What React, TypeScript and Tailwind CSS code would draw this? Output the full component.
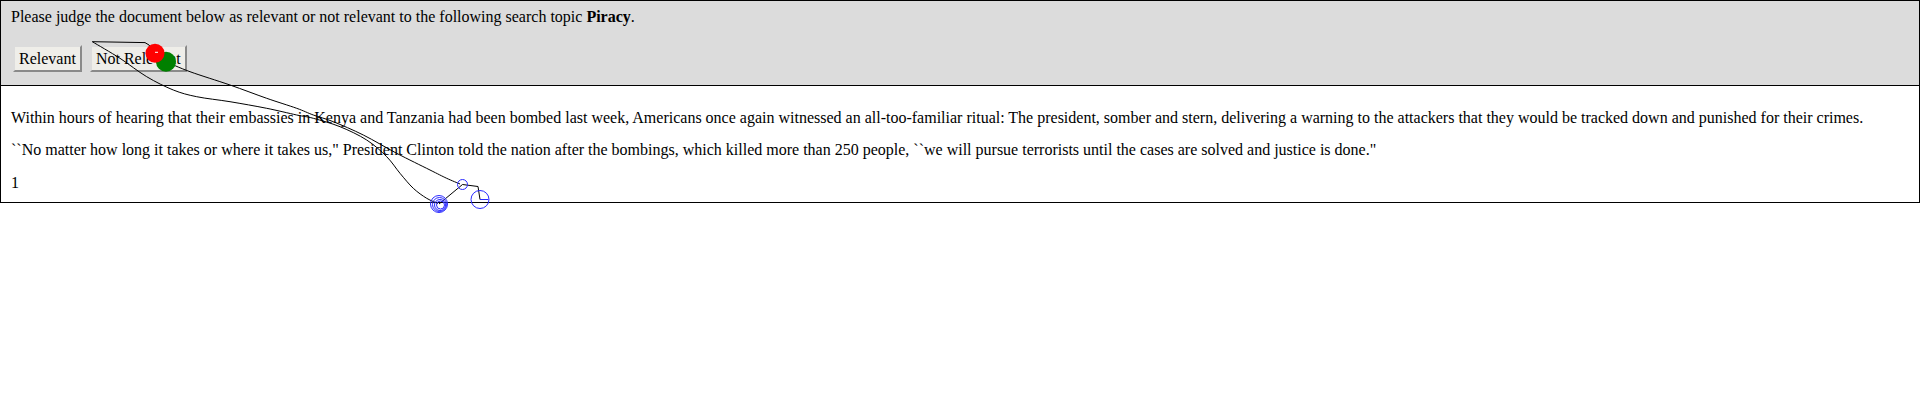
import React from "react";

type Pt = [number, number];

// mouse trace, in page pixels
const traceA: Pt[] = [
  [92.3, 41.7], [120, 58.3], [146.7, 76.7], [173.3, 90], [196.7, 96.7], [230, 101.7],
  [266.7, 108.3], [296.7, 115], [313.3, 118.3], [340, 126.7], [366.7, 140], [386.7, 156.7],
  [400, 173.3], [413.3, 188.3], [426.7, 198.3], [438, 203.5],
];

const traceB: Pt[] = [
  [166, 61.7], [190, 71.7], [230, 85], [266.7, 98.3], [296.7, 108.3], [313.3, 115],
  [333.3, 121.7], [363.3, 135], [396.7, 153.3], [430, 170], [446.7, 178.3], [460, 184],
];

function smooth(pts: Pt[]) {
  let d = `M${pts[0][0]},${pts[0][1]}`;
  for (let i = 0; i < pts.length - 1; i++) {
    const p0 = pts[i - 1] || pts[i];
    const p1 = pts[i];
    const p2 = pts[i + 1];
    const p3 = pts[i + 2] || p2;
    const c1x = p1[0] + (p2[0] - p0[0]) / 6;
    const c1y = p1[1] + (p2[1] - p0[1]) / 6;
    const c2x = p2[0] - (p3[0] - p1[0]) / 6;
    const c2y = p2[1] - (p3[1] - p1[1]) / 6;
    d += ` C${c1x},${c1y} ${c2x},${c2y} ${p2[0]},${p2[1]}`;
  }
  return d;
}

function Trace() {
  return (
    <svg className="absolute inset-0 pointer-events-none" width={1920} height={400}>
      <g fill="none" stroke="#000" strokeWidth={1}>
        <path d="M155,53 L149,45 L145,42.6 L92.3,41.7" />
        <path d={smooth(traceA)} />
        <path d={smooth(traceB)} />
        <path d="M439,204 L462.5,184.5" />
        <path d="M462.5,184.5 L478,186.5 L480,199.5" />
      </g>
      <circle cx={166} cy={61.7} r={10} fill="#008000" />
      <circle cx={155} cy={53.3} r={9.5} fill="#ff0000" />
      <path d="M155,52.3 L158,52.3" stroke="#fff" strokeWidth={1} />
      <g fill="none" stroke="#2a2aff" strokeWidth={1}>
        <circle cx={439} cy={204} r={8.5} />
        <circle cx={439.5} cy={204.5} r={7} />
        <circle cx={440} cy={205} r={5.5} />
        <circle cx={440.5} cy={205} r={4} />
        <circle cx={462.5} cy={184.5} r={5} />
        <circle cx={480} cy={199.5} r={9} />
        <path d="M480,199.5 L488.5,199.5" />
      </g>
    </svg>
  );
}

const btn =
  "h-[27px] px-[4px] bg-[#efeee9] border-2 border-t-[#dcdcdc] border-l-[#dcdcdc] border-r-[#8a8a8a] border-b-[#8a8a8a] leading-[17px] text-[16px] text-black";

export default function App() {
  return (
    <div className="relative w-full h-[400px] bg-white text-black text-[16px] leading-[17px] font-['Liberation_Serif',serif]">
      <div className="border border-black">
        <div className="bg-[#dcdcdc] border-b border-black pl-[10px] pt-[7px] pb-[13px]">
          <p>
            Please judge the document below as relevant or not relevant to the following search topic <b>Piracy</b>.
          </p>
          <div className="mt-[20px] flex gap-[8px] pl-[2px]">
            <button className={btn}>Relevant</button>
            <button className={btn}>Not Relevant</button>
          </div>
        </div>
        <div className="flex flex-col px-[10px] pt-[23px] pb-[11px]">
          <p>
            Within hours of hearing that their embassies in Kenya and Tanzania had been bombed last week, Americans once again witnessed an all-too-familiar ritual: The president, somber and stern, delivering a warning to the attackers that they would be tracked down and punished for their crimes.
          </p>
          <p className="mt-[15px]">
            ``No matter how long it takes or where it takes us," President Clinton told the nation after the bombings, which killed more than 250 people, ``we will pursue terrorists until the cases are solved and justice is done."
          </p>
          <p className="mt-[16px]">1</p>
        </div>
      </div>
      <Trace />
    </div>
  );
}
